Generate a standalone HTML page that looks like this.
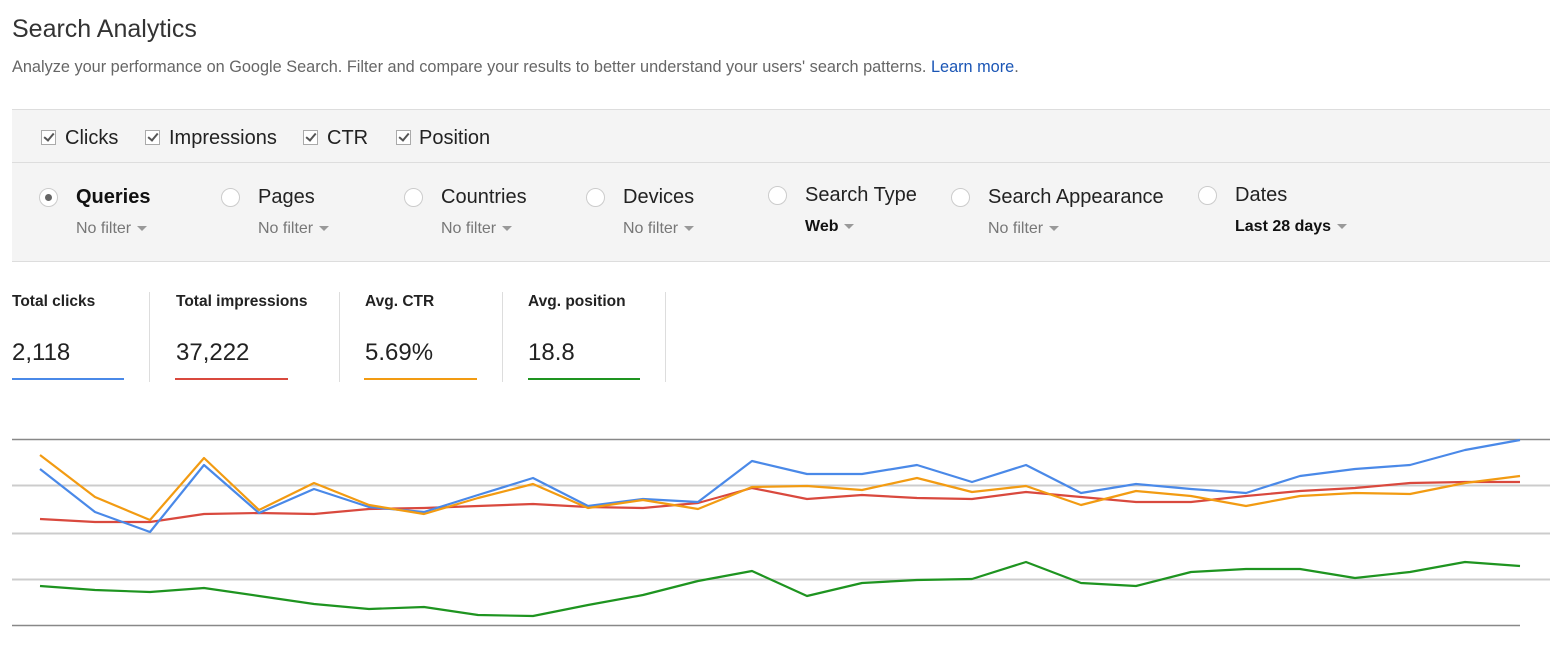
<!DOCTYPE html>
<html><head><meta charset="utf-8"><style>
body{margin:0;width:1568px;height:651px;background:#fff;font-family:"Liberation Sans",Arial,sans-serif;position:relative;overflow:hidden;color:#222}
.a{position:absolute;white-space:nowrap}
.cb{position:absolute;width:13px;height:13px;border:1px solid #aaa;background:#fff;top:130px}
.cb:after{content:"";position:absolute;left:4px;top:0px;width:4px;height:8px;border:solid #555;border-width:0 2px 2px 0;transform:rotate(40deg)}
.rd{position:absolute;width:17px;height:17px;border:1px solid #ccc;border-radius:50%;background:#fff}
.lab{font-size:20px;color:#222}
.nf{font-size:16px;color:#777}
.car{display:inline-block;width:0;height:0;border-left:5px solid transparent;border-right:5px solid transparent;border-top:5px solid #999;vertical-align:middle;margin-left:6px}
.mt{font-size:15.5px;font-weight:bold;top:293px}
.mv{font-size:24px;top:339px}
.vl{position:absolute;top:292px;width:1px;height:90px;background:#ddd}
</style></head><body>
<div class="a" style="left:12px;top:15px;font-size:25px;color:#333">Search Analytics</div>
<div class="a" style="left:12px;top:58px;font-size:16.3px;color:#666">Analyze your performance on Google Search. Filter and compare your results to better understand your users' search patterns. <span style="color:#1a55b5">Learn more</span>.</div>
<div class="a" style="left:12px;top:109px;width:1538px;height:151px;background:#f4f4f4;border-top:1px solid #ddd;border-bottom:1px solid #ddd"></div>
<div class="a" style="left:12px;top:162px;width:1538px;height:1px;background:#ddd"></div>
<div class="cb" style="left:41px"></div><div class="a lab" style="left:65px;top:127px">Clicks</div>
<div class="cb" style="left:145px"></div><div class="a lab" style="left:169px;top:127px">Impressions</div>
<div class="cb" style="left:303px"></div><div class="a lab" style="left:327px;top:127px">CTR</div>
<div class="cb" style="left:396px"></div><div class="a lab" style="left:419px;top:127px">Position</div>

<div class="rd" style="left:39px;top:188px"><div style="position:absolute;left:5px;top:5px;width:7px;height:7px;border-radius:50%;background:#666"></div></div>
<div class="a lab" style="left:76px;top:186px;font-weight:bold;color:#111">Queries</div>
<div class="a nf" style="left:76px;top:220px">No filter<span class="car"></span></div>
<div class="rd" style="left:221px;top:188px"></div>
<div class="a lab" style="left:258px;top:186px">Pages</div>
<div class="a nf" style="left:258px;top:220px">No filter<span class="car"></span></div>
<div class="rd" style="left:404px;top:188px"></div>
<div class="a lab" style="left:441px;top:186px">Countries</div>
<div class="a nf" style="left:441px;top:220px">No filter<span class="car"></span></div>
<div class="rd" style="left:586px;top:188px"></div>
<div class="a lab" style="left:623px;top:186px">Devices</div>
<div class="a nf" style="left:623px;top:220px">No filter<span class="car"></span></div>
<div class="rd" style="left:768px;top:186px"></div>
<div class="a lab" style="left:805px;top:184px">Search Type</div>
<div class="a" style="left:805px;top:218px;font-size:16px;font-weight:bold;color:#111">Web<span class="car"></span></div>
<div class="rd" style="left:951px;top:188px"></div>
<div class="a lab" style="left:988px;top:186px">Search Appearance</div>
<div class="a nf" style="left:988px;top:220px">No filter<span class="car"></span></div>
<div class="rd" style="left:1198px;top:186px"></div>
<div class="a lab" style="left:1235px;top:184px">Dates</div>
<div class="a" style="left:1235px;top:218px;font-size:16px;font-weight:bold;color:#111">Last 28 days<span class="car"></span></div>

<div class="a mt" style="left:12px">Total clicks</div>
<div class="a mv" style="left:12px">2,118</div>
<div class="a" style="left:12px;top:378px;width:112px;height:2px;background:#4a89e8"></div>
<div class="vl" style="left:149px"></div>
<div class="a mt" style="left:176px">Total impressions</div>
<div class="a mv" style="left:176px">37,222</div>
<div class="a" style="left:175px;top:378px;width:113px;height:2px;background:#d9493e"></div>
<div class="vl" style="left:339px"></div>
<div class="a mt" style="left:365px">Avg. CTR</div>
<div class="a mv" style="left:365px">5.69%</div>
<div class="a" style="left:364px;top:378px;width:113px;height:2px;background:#f29b12"></div>
<div class="vl" style="left:502px"></div>
<div class="a mt" style="left:528px">Avg. position</div>
<div class="a mv" style="left:528px">18.8</div>
<div class="a" style="left:528px;top:378px;width:112px;height:2px;background:#1e9420"></div>
<div class="vl" style="left:665px"></div>

<svg class="a" style="left:0;top:0" width="1568" height="651">
<g stroke-width="2">
<line x1="12" x2="1550" y1="439.5" y2="439.5" stroke="#888" stroke-width="1.5"/>
<line x1="12" x2="1550" y1="485.5" y2="485.5" stroke="#ccc"/>
<line x1="12" x2="1550" y1="533.5" y2="533.5" stroke="#ccc"/>
<line x1="12" x2="1550" y1="579.5" y2="579.5" stroke="#ccc"/>
<line x1="12" x2="1520" y1="625.5" y2="625.5" stroke="#888" stroke-width="1.5"/>
</g>
<g fill="none" stroke-width="2.2" stroke-linejoin="round">
<polyline stroke="#d9493e" points="40,519 95,522 150,522 204,514 259,513 314,514 369,509 424,508 478,506 533,504 588,507 643,508 698,503 752,488 807,499 862,495 917,498 972,499 1026,492 1081,497 1136,502 1191,502 1246,496 1300,491 1355,488 1410,483 1465,482 1520,482"/>
<polyline stroke="#4a89e8" points="40,469 95,512 150,532 204,465 259,513 314,489 369,507 424,512 478,495 533,478 588,506 643,499 698,502 752,461 807,474 862,474 917,465 972,482 1026,465 1081,493 1136,484 1191,489 1246,493 1300,476 1355,469 1410,465 1465,450 1520,440"/>
<polyline stroke="#f29b12" points="40,455 95,497 150,520 204,458 259,510 314,483 369,505 424,514 478,498 533,484 588,508 643,500 698,509 752,487 807,486 862,490 917,478 972,492 1026,486 1081,505 1136,491 1191,496 1246,506 1300,496 1355,493 1410,494 1465,483 1520,476"/>
<polyline stroke="#1e9420" points="40,586 95,590 150,592 204,588 259,596 314,604 369,609 424,607 478,615 533,616 588,605 643,595 698,581 752,571 807,596 862,583 917,580 972,579 1026,562 1081,583 1136,586 1191,572 1246,569 1300,569 1355,578 1410,572 1465,562 1520,566"/>
</g>
</svg>
</body></html>
